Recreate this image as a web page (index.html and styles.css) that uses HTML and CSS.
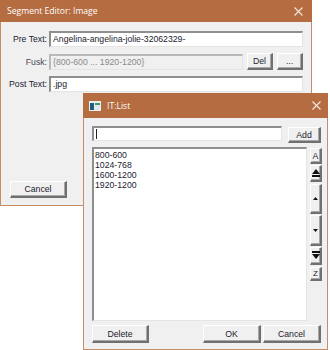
FILE: index.html
```html
<!DOCTYPE html>
<html>
<head>
<meta charset="utf-8">
<link rel="stylesheet" href="styles.css">
</head>
<body>
<div class="desk">
  <div class="win win1">
    <div class="title">
      <span class="ttext">Segment Editor: Image</span>
      <span class="close"><svg width="9" height="9" viewBox="0 0 9 9"><path d="M0.5 0.5 L8.5 8.5 M8.5 0.5 L0.5 8.5" stroke="#f7e9e0" stroke-width="1.1"/></svg></span>
    </div>
    <div class="body1">
      <div class="form">
        <label class="lbl">Pre Text:</label>
        <div class="field"><div class="input">Angelina-angelina-jolie-32062329-</div></div>
        <label class="lbl dim">Fusk:</label>
        <div class="field fusk">
          <div class="input disabled">{800-600 ... 1920-1200}</div>
          <div class="btn del">Del</div>
          <div class="btn dots">...</div>
        </div>
        <label class="lbl">Post Text:</label>
        <div class="field"><div class="input">.jpg</div></div>
      </div>
      <div class="btn cancel1">Cancel</div>
    </div>
  </div>

  <div class="win win2">
    <div class="title t2">
      <span class="appicon"><svg width="12" height="10" viewBox="0 0 12 10"><rect x="0" y="0" width="12" height="10" fill="#e9eef0"/><rect x="1" y="2" width="4" height="7" fill="#1f5d7a"/><rect x="6" y="2" width="5" height="7" fill="#dfe8ea"/><rect x="6" y="2" width="5" height="2" fill="#3f9a6a"/></svg></span>
      <span class="ttext">IT:List</span>
      <span class="close c2"><svg width="9" height="9" viewBox="0 0 9 9"><path d="M0.5 0.5 L8.5 8.5 M8.5 0.5 L0.5 8.5" stroke="#f7e9e0" stroke-width="1.1"/></svg></span>
    </div>
    <div class="body2">
      <div class="addrow">
        <div class="input entry"><span class="caret"></span></div>
        <div class="btn add">Add</div>
      </div>
      <div class="listrow">
        <div class="listbox">
          <div>800-600</div>
          <div>1024-768</div>
          <div>1600-1200</div>
          <div>1920-1200</div>
        </div>
        <div class="side">
          <div class="btn sb sA">A</div>
          <div class="btn sb sTop"><svg width="8" height="9" viewBox="0 0 8 9"><path d="M4 0 L8 5 L0 5 Z" fill="#111"/><rect x="0" y="6" width="8" height="2" fill="#111"/></svg></div>
          <div class="btn sb sUp"><svg width="5" height="3" viewBox="0 0 5 3"><path d="M2.5 0 L5 3 L0 3 Z" fill="#111"/></svg></div>
          <div class="btn sb sDn"><svg width="5" height="3" viewBox="0 0 5 3"><path d="M0 0 L5 0 L2.5 3 Z" fill="#111"/></svg></div>
          <div class="btn sb sBot"><svg width="8" height="9" viewBox="0 0 8 9"><rect x="0" y="0" width="8" height="2" fill="#111"/><path d="M0 3 L8 3 L4 8 Z" fill="#111"/></svg></div>
          <div class="btn sb sZ">Z</div>
        </div>
      </div>
      <div class="botrow">
        <div class="btn bdel">Delete</div>
        <div class="spacer"></div>
        <div class="btn bok">OK</div>
        <div class="btn bcan">Cancel</div>
      </div>
    </div>
  </div>
</div>
</body>
</html>
```

FILE: styles.css
```css
* { box-sizing: border-box; }
html, body { margin: 0; padding: 0; background: #ffffff; }
body {
  width: 330px; height: 350px; overflow: hidden;
  font-family: "Liberation Sans", Arial, sans-serif;
  font-size: 8.7px; color: #1b1b2e;
}
.desk { position: relative; width: 330px; height: 350px; }

.win {
  position: absolute;
  background: #f0f0f0;
  border: 1px solid #c58e67;
  display: flex; flex-direction: column;
}
.win1 { left: 0; top: 0; width: 312px; height: 206px; }
.win2 { left: 83px; top: 93px; width: 245px; height: 257px; }

.title {
  background: #b46c40;
  color: #ffffff;
  height: 22px;
  margin: -1px -1px 0 -1px;
  display: flex; align-items: center;
  padding: 0 0 0 7px;
  font-family: "Open Sans", "Noto Sans", sans-serif;
  font-size: 8.6px;
  flex: none;
}
.t2 { height: 25px; padding-left: 6px; }
.ttext { flex: 1; }
.close {
  width: 24px; display: flex; justify-content: center; align-items: center;
  margin-right: 2px;
}
.c2 { margin-right: 0; }
.appicon { width: 12px; height: 10px; margin-right: 6px; display: flex; }

.body1 {
  flex: 1; display: flex; flex-direction: column;
  padding: 9px 8px 7px 8px;
}
.form {
  display: grid;
  grid-template-columns: 38px 1fr;
  column-gap: 2px;
  row-gap: 6px;
  align-items: center;
}
.lbl { text-align: right; white-space: nowrap; }
.lbl.dim { color: #4a4a55; }
.field { display: flex; align-items: center; }
.fusk { gap: 4px; }

.input {
  flex: 1;
  height: 16px;
  background: #ffffff;
  border-top: 2px solid #8e8e8e;
  border-left: 2px solid #8e8e8e;
  border-bottom: 1px solid #e4e4e4;
  border-right: 1px solid #e4e4e4;
  padding: 0 2px;
  line-height: 13px;
  white-space: nowrap; overflow: hidden;
}
.input.disabled {
  background: #f0f0f0;
  color: #8a8a8a;
  border-top-color: #b9b9b9; border-left-color: #b9b9b9;
}

.btn {
  background: #f0f0f0;
  border-top: 1px solid #ffffff;
  border-left: 1px solid #ffffff;
  border-right: 2px solid #707070;
  border-bottom: 2px solid #707070;
  box-shadow: inset -1px -1px 0 #a8a8a8;
  display: flex; align-items: center; justify-content: center;
  flex: none;
}
.del { width: 26px; height: 17px; }
.dots { width: 26px; height: 17px; }

.cancel1 { width: 57px; height: 17px; margin-top: auto; margin-left: 1px; }

.body2 {
  flex: 1; display: flex; flex-direction: column;
  padding: 8px 6px 7px 8px;
}
.addrow { display: flex; align-items: flex-start; gap: 6px; }
.entry { height: 15px; flex: none; width: 190px; padding-left: 2px; display: flex; align-items: center; }
.caret { width: 1px; height: 10px; background: #222; }
.add { width: 33px; height: 16px; margin-top: 1px; }

.listrow { display: flex; gap: 3px; margin-top: 4px; height: 174px; }
.listbox {
  width: 215px; flex: none;
  background: #ffffff;
  border-top: 2px solid #8e8e8e;
  border-left: 2px solid #8e8e8e;
  border-bottom: 1px solid #e4e4e4;
  border-right: 1px solid #e4e4e4;
  padding: 1px 1px;
  line-height: 10px;
}
.side { display: flex; flex-direction: column; width: 12px; padding-top: 1px; }
.sb { width: 12px; }
.sA { height: 16px; }
.sTop { height: 17px; margin-top: 1px; }
.sUp { height: 30px; margin-top: 2px; }
.sDn { height: 31px; margin-top: 1px; }
.sBot { height: 18px; margin-top: 1px; }
.sZ { height: 14px; margin-top: 2px; font-size: 8px; }

.botrow { display: flex; margin-top: 4px; gap: 2px; }
.spacer { flex: 1; }
.bdel { width: 57px; height: 18px; }
.bok { width: 58px; height: 18px; }
.bcan { width: 58px; height: 18px; }
```
